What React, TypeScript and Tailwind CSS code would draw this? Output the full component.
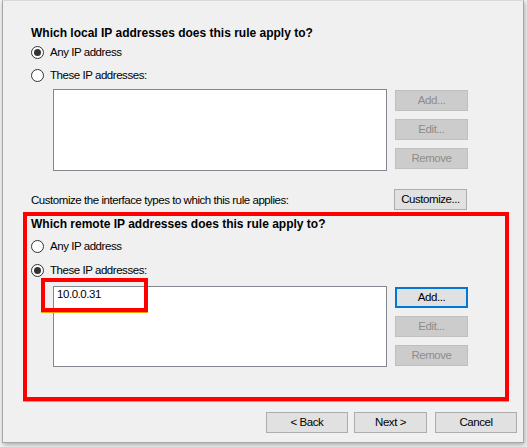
import React from "react";

function Radio({ checked, label }: { checked?: boolean; label: string }) {
  return (
    <div className="flex h-4 items-center">
      <span className="flex h-[13px] w-[13px] items-center justify-center rounded-full border border-[#333333] bg-white">
        {checked && <span className="h-[7px] w-[7px] rounded-full bg-[#333333]" />}
      </span>
      <span className="ml-[6px] text-[11.5px] leading-4 tracking-[-0.45px] text-black">{label}</span>
    </div>
  );
}

function Btn({ label, disabled, focused, className = "" }: { label: string; disabled?: boolean; focused?: boolean; className?: string }) {
  const look = disabled
    ? "border border-[#bfbfbf] bg-[#cccccc] text-[#8c8c8c]"
    : focused
      ? "border-2 border-[#0078d7] bg-[#e1e1e1] text-black"
      : "border border-[#adadad] bg-[#e1e1e1] text-black";
  return (
    <div className={`flex h-[21px] w-[73px] items-center justify-center text-[11.5px] tracking-[-0.45px] ${look} ${className}`}>
      {label}
    </div>
  );
}

function SideButtons({ focusAdd }: { focusAdd?: boolean }) {
  return (
    <div className="ml-[8px] mt-[1px] flex flex-col gap-[8px]">
      <Btn label="Add..." disabled={!focusAdd} focused={focusAdd} />
      <Btn label="Edit..." disabled />
      <Btn label="Remove" disabled />
    </div>
  );
}

export default function App() {
  return (
    <div className="h-[447px] w-[527px] overflow-hidden bg-[#f4f4f4] font-['Liberation_Sans',Arial,sans-serif]">
      <div className="ml-[2px] h-[443px] w-[522px] border border-[#a6a6a6] border-t-[#d9d9d9] bg-[#f0f0f0] shadow-[1px_2px_5px_rgba(0,0,0,0.3)]">
        <div className="pl-[28px] pt-[24px]">
          <div className="h-4 text-[12px] font-bold leading-4 text-black">Which local IP addresses does this rule apply to?</div>
          <div className="mt-[3px]">
            <Radio checked label="Any IP address" />
          </div>
          <div className="mt-[7px]">
            <Radio label="These IP addresses:" />
          </div>
          <div className="ml-[22px] mt-[6px] flex items-start">
            <div className="h-[82px] w-[334px] border border-[#828790] bg-white" />
            <SideButtons />
          </div>

          <div className="mt-[18px] flex w-[436px] items-center justify-between">
            <span className="text-[11.5px] leading-4 tracking-[-0.45px] text-black">Customize the interface types to which this rule applies:</span>
            <Btn label="Customize..." />
          </div>

          <div className="ml-[-8px] mt-[2px] h-[189px] w-[486px] border-4 border-[#ff0000] pl-[4px] shadow-[0_1px_0_#f5a300]">
            <div className="h-4 text-[12px] font-bold leading-4 text-black">Which remote IP addresses does this rule apply to?</div>
            <div className="mt-[6px]">
              <Radio label="Any IP address" />
            </div>
            <div className="mt-[8px]">
              <Radio checked label="These IP addresses:" />
            </div>
            <div className="ml-[22px] mt-[8px] flex items-start">
              <div className="relative h-[81px] w-[334px] border border-[#828790] bg-white">
                <div className="pl-[3px] text-[11.5px] leading-[14px] tracking-[-0.45px] text-black">10.0.0.31</div>
                <div className="absolute left-[-13px] top-[-9px] h-[34px] w-[107px] border-4 border-[#ff0000] shadow-[0_1px_0_#f5a300]" />
              </div>
              <SideButtons focusAdd />
            </div>
          </div>
        </div>

        <div className="mt-[11px] flex justify-end pr-[6px]">
          <Btn label="< Back" className="w-[82px]" />
          <Btn label="Next >" className="ml-[6px]" />
          <Btn label="Cancel" className="ml-[8px] w-[82px]" />
        </div>
      </div>
    </div>
  );
}
